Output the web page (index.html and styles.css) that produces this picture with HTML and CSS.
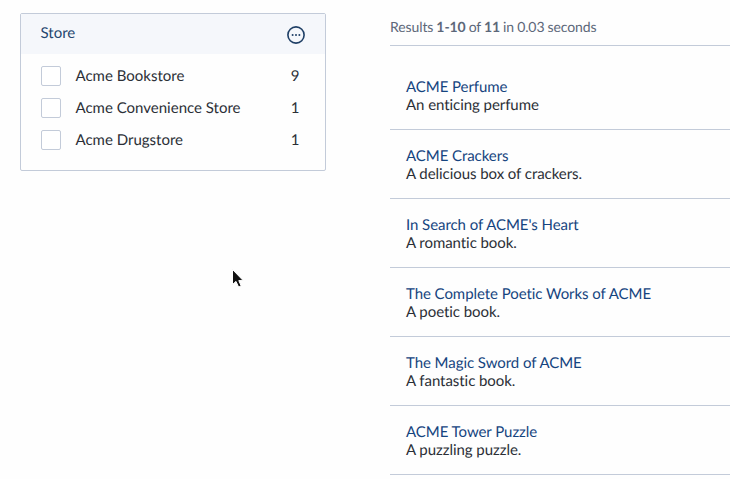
FILE: index.html
```html
<!DOCTYPE html>
<html lang="en">
<head>
<meta charset="utf-8">
<title>Search results</title>
<link rel="stylesheet" href="styles.css">
</head>
<body>
<div class="page">
  <aside class="sidebar">
    <section class="panel">
      <header class="panel-head">
        <span class="panel-title">Store</span>
        <svg class="more" width="20" height="20" viewBox="0 0 20 20" aria-hidden="true">
          <circle cx="10" cy="10" r="8.1" fill="none" stroke="#1f3f66" stroke-width="1.6"/>
          <circle cx="6.6" cy="10" r="1" fill="#1f3f66"/>
          <circle cx="10" cy="10" r="1" fill="#1f3f66"/>
          <circle cx="13.4" cy="10" r="1" fill="#1f3f66"/>
        </svg>
      </header>
      <ul class="facets">
        <li class="facet"><span class="check"></span><span class="facet-label">Acme Bookstore</span><span class="facet-count">9</span></li>
        <li class="facet"><span class="check"></span><span class="facet-label">Acme Convenience Store</span><span class="facet-count">1</span></li>
        <li class="facet"><span class="check"></span><span class="facet-label">Acme Drugstore</span><span class="facet-count">1</span></li>
      </ul>
    </section>
  </aside>
  <main class="results">
    <div class="summary">Results <b>1-10</b> of <b>11</b> in 0.03 seconds</div>
    <ul class="result-list">
      <li class="result"><a class="result-title">ACME Perfume</a><p class="result-desc">An enticing perfume</p></li>
      <li class="result"><a class="result-title">ACME Crackers</a><p class="result-desc">A delicious box of crackers.</p></li>
      <li class="result"><a class="result-title">In Search of ACME's Heart</a><p class="result-desc">A romantic book.</p></li>
      <li class="result"><a class="result-title">The Complete Poetic Works of ACME</a><p class="result-desc">A poetic book.</p></li>
      <li class="result"><a class="result-title">The Magic Sword of ACME</a><p class="result-desc">A fantastic book.</p></li>
      <li class="result"><a class="result-title">ACME Tower Puzzle</a><p class="result-desc">A puzzling puzzle.</p></li>
    </ul>
  </main>
</div>
<svg class="cursor" width="14" height="21" viewBox="0 0 14 21" aria-hidden="true">
  <path d="M1.5 1.5V16.5L5 13.4L7.6 19L10.2 18L7.8 12.6H12.2Z" fill="#111" stroke="#fff" stroke-width="1"/>
</svg>
</body>
</html>
```
FILE: styles.css
```css
* { box-sizing: border-box; }
html, body { margin: 0; height: 100%; overflow: hidden; }
body {
  background: #fefefe;
  font-family: Lato, "Open Sans", sans-serif;
  font-size: 15px;
  color: #2b2f36;
  text-rendering: geometricPrecision;
}
ul { list-style: none; margin: 0; padding: 0; }
p { margin: 0; }
.page { display: flex; padding-left: 20px; }
.sidebar { width: 306px; padding-top: 13px; flex: none; }
.panel { border: 1px solid #c3cbd9; border-radius: 2px; height: 158px; }
.panel-head {
  height: 40px;
  display: flex;
  align-items: center;
  justify-content: space-between;
  padding: 0 19px 0 19.5px;
  background: #f5f7fb;
}
.panel-title { color: #24466e; line-height: 18px; margin-top: -2px; }
.more { margin-top: 2px; }
.facets { padding: 6px 25.5px 0 20px; }
.facet { height: 32px; display: flex; align-items: center; line-height: 18px; }
.check {
  width: 20px;
  height: 20px;
  border: 1px solid #c3cbd9;
  border-radius: 2px;
  background: #fff;
  flex: none;
}
.facet-label { margin-left: 14.5px; flex: 1; }
.facet-count { text-align: right; }
.results { width: 340px; margin-left: 64px; flex: none; }
.summary {
  padding-top: 18px;
  height: 46px;
  line-height: 18px;
  border-bottom: 1px solid #c3cbd9;
  color: #5c6779;
  font-size: 14px;
  letter-spacing: -0.1px;
  word-spacing: -0.4px;
}
.summary b { font-weight: 700; }
.result-list { padding-top: 15px; }
.result {
  height: 69px;
  padding: 17px 16px 0;
  border-bottom: 1px solid #c3cbd9;
  line-height: 18px;
  letter-spacing: -0.06px;
}
.result-title { color: #15447f; display: block; }
.result-desc { color: #2b2f36; }
.cursor { position: absolute; left: 231px; top: 268px; }
```
